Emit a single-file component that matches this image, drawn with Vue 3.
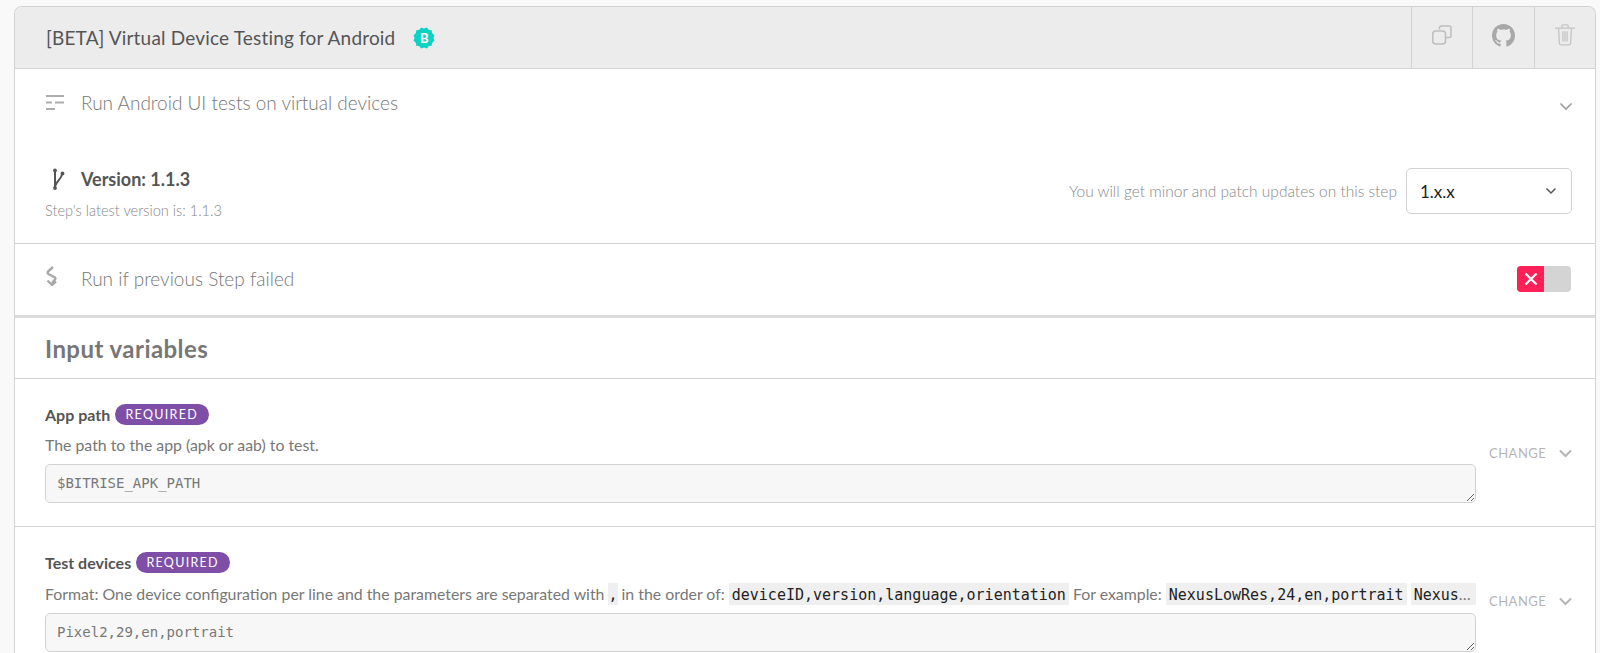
<script setup>
const badgePoints = Array.from({ length: 24 }, (_, i) => {
  const r = i % 2 ? 10.8 : 9.5
  const a = (i * Math.PI) / 12
  return `${(11 + r * Math.sin(a)).toFixed(2)},${(11 - r * Math.cos(a)).toFixed(2)}`
}).join(' ')
</script>

<template>
  <div class="page">
    <section class="card">
      <header class="head">
        <div class="title">
          <span>[BETA] Virtual Device Testing for Android</span>
          <span class="badge">
            <svg width="22" height="22" viewBox="0 0 22 22"><polygon :points="badgePoints" fill="#0dd3c4" /></svg>
            <b>B</b>
          </span>
        </div>
        <button class="tool">
          <svg width="24" height="24" viewBox="0 0 24 24" fill="none" stroke="#bdbdbd" stroke-width="1.5">
            <path d="M9.5 6.5V4.8A1.8 1.8 0 0 1 11.3 3h7.9A1.8 1.8 0 0 1 21 4.8v7.9a1.8 1.8 0 0 1-1.8 1.8h-3.7" />
            <rect x="2.8" y="8" width="12.7" height="13" rx="3" />
          </svg>
        </button>
        <button class="tool">
          <svg width="23" height="23" viewBox="0 0 16 16" fill="#a8a8a8">
            <path d="M8 0C3.58 0 0 3.58 0 8c0 3.54 2.29 6.53 5.47 7.59.4.07.55-.17.55-.38 0-.19-.01-.82-.01-1.49-2.01.37-2.53-.49-2.69-.94-.09-.23-.48-.94-.82-1.13-.28-.15-.68-.52-.01-.53.63-.01 1.08.58 1.23.82.72 1.21 1.87.87 2.33.66.07-.52.28-.87.51-1.07-1.78-.2-3.64-.89-3.64-3.95 0-.87.31-1.59.82-2.15-.08-.2-.36-1.02.08-2.12 0 0 .67-.21 2.2.82.64-.18 1.32-.27 2-.27s1.36.09 2 .27c1.53-1.04 2.2-.82 2.2-.82.44 1.1.16 1.92.08 2.12.51.56.82 1.27.82 2.15 0 3.07-1.87 3.75-3.65 3.95.29.25.54.73.54 1.48 0 1.07-.01 1.93-.01 2.2 0 .21.15.46.55.38A8.01 8.01 0 0 0 16 8c0-4.42-3.58-8-8-8z" />
          </svg>
        </button>
        <button class="tool">
          <svg width="22" height="24" viewBox="0 0 24 26" fill="none" stroke="#c4c4c4" stroke-width="1.4">
            <path d="M1 5.500h22M8.500 5V3.200c0-.7.5-1.200 1.200-1.200h4.600c.7 0 1.200.5 1.200 1.200V5" />
            <path d="M5 6l.8 15.500c.1 1.400 1 2.300 2.400 2.300h7.600c1.400 0 2.300-.9 2.400-2.300L19 6" />
            <path d="M9.700 9v11M12 9v11M14.300 9v11" />
          </svg>
        </button>
      </header>

      <div class="row row-desc">
        <svg class="row-icon desc-icon" width="20" height="16" viewBox="0 0 20 16" stroke="#adadad" stroke-width="2" fill="none">
          <path d="M1 2h18M1 8.500h6M10 8.500h9M1 15h9" />
        </svg>
        <span class="row-label">Run Android UI tests on virtual devices</span>
        <svg class="chev-desc" width="14" height="9" viewBox="0 0 14 9" fill="none" stroke="#9a9a9a" stroke-width="1.6">
          <path d="M1.500 1.500 7 7l5.500-5.500" />
        </svg>
      </div>

      <div class="version">
        <div class="version-left">
          <div class="version-name">
            <svg class="row-icon" width="20" height="22" viewBox="0 0 20 22" fill="none" stroke="#555" stroke-width="2">
              <circle cx="10" cy="2.500" r="1.900" fill="#555" stroke="none" />
              <circle cx="10" cy="20" r="1.900" fill="#555" stroke="none" />
              <circle cx="17.500" cy="5.500" r="1.900" fill="#555" stroke="none" />
              <path d="M10 2.500V20M17 6c-.5 5-4.500 6-6.500 11.500" />
            </svg>
            <strong>Version: 1.1.3</strong>
          </div>
          <div class="latest">Step's latest version is: 1.1.3</div>
        </div>
        <div class="version-right">
          <span class="updates">You will get minor and patch updates on this step</span>
          <div class="select">
            <span>1.x.x</span>
            <svg width="12" height="8" viewBox="0 0 12 8" fill="none" stroke="#555" stroke-width="1.500">
              <path d="M1.500 1.500 6 6l4.500-4.500" />
            </svg>
          </div>
        </div>
      </div>

      <div class="row row-run">
        <svg class="row-icon run-icon" width="20" height="20" viewBox="0 0 20 20" fill="none" stroke="#a8a8a8" stroke-width="2.400">
          <path d="M8 1 3 5.500Q2 7 3.500 8L10 11.500Q11 12.500 10 13.500L7 17" />
          <path d="M2.500 14.500 7 19l4-3.500" />
        </svg>
        <span class="row-label">Run if previous Step failed</span>
        <div class="toggle">
          <span class="toggle-on">
            <svg width="14" height="14" viewBox="0 0 14 14" stroke="#fff" stroke-width="2.200"><path d="M1.500 1.500l11 11M12.500 1.500l-11 11" /></svg>
          </span>
        </div>
      </div>

      <h2 class="inputs">Input variables</h2>

      <div class="field">
        <div class="field-main">
          <div class="field-name"><strong>App path</strong><span class="req">REQUIRED</span></div>
          <p class="field-desc">The path to the app (apk or aab) to test.</p>
          <textarea class="area" readonly spellcheck="false">$BITRISE_APK_PATH</textarea>
        </div>
        <div class="change">
          <span>CHANGE</span>
          <svg width="13" height="9" viewBox="0 0 13 9" fill="none" stroke="#b5b5b5" stroke-width="2"><path d="M1 1.500l5.500 5.500L12 1.500" /></svg>
        </div>
      </div>

      <div class="field">
        <div class="field-main">
          <div class="field-name"><strong>Test devices</strong><span class="req">REQUIRED</span></div>
          <p class="field-desc with-code">Format: One device configuration per line and the parameters are separated with <code class="tight">,</code> in the order of: <code>deviceID,version,language,orientation</code> For example: <code>NexusLowRes,24,en,portrait</code> <code>NexusLowRes,24,en,landscape</code></p>
          <textarea class="area" readonly spellcheck="false">Pixel2,29,en,portrait</textarea>
        </div>
        <div class="change">
          <span>CHANGE</span>
          <svg width="13" height="9" viewBox="0 0 13 9" fill="none" stroke="#b5b5b5" stroke-width="2"><path d="M1 1.500l5.500 5.500L12 1.500" /></svg>
        </div>
      </div>
    </section>
  </div>
</template>

<style>
html, body { margin: 0; background: #f9f9f9; overflow: hidden; }
</style>

<style scoped>
.page {
  height: 653px;
  overflow: hidden;
  box-sizing: border-box;
  padding: 6px 4px 0 14px;
  font-family: Lato, "Noto Sans", sans-serif;
  color: #555;
}
.card {
  background: #fff;
  border: 1px solid #d2d2d2;
  border-bottom: 0;
  border-radius: 8px 8px 0 0;
}
.head {
  display: flex;
  height: 61px;
  background: #ececec;
  border-bottom: 1px solid #d4d4d4;
  border-radius: 7px 7px 0 0;
}
.title {
  flex: 1;
  display: flex;
  align-items: center;
  gap: 18px;
  padding-left: 31px;
  font-size: 19px;
  letter-spacing: .18px;
  color: #555;
}
.badge { position: relative; width: 22px; height: 22px; display: block; }
.badge svg { display: block; }
.badge b {
  position: absolute;
  inset: 0;
  text-align: center;
  line-height: 22px;
  font-size: 13px;
  letter-spacing: 0;
  color: #fff;
  font-weight: 900;
}
.tool {
  width: 61.500px;
  padding: 0 0 5px;
  border: 0;
  border-left: 1px solid #d2d2d2;
  background: transparent;
  display: flex;
  align-items: center;
  justify-content: center;
}
.row { display: flex; align-items: center; padding: 0 24px 0 30px; }
.row-icon { flex: none; }
.row-label { font-size: 19px; font-weight: 300; color: #777; margin-left: 16px; flex: 1; }
.row-desc { height: 71px; padding-bottom: 4px; box-sizing: border-box; }
.desc-icon { margin-top: -2px; }
.row-run { height: 72px; border-top: 1px solid #d2d2d2; box-sizing: border-box; padding-bottom: 3px; }
.chev-desc { margin-top: 7px; margin-right: -2px; }
.run-icon { margin-top: -5px; }
.version {
  height: 103px;
  box-sizing: border-box;
  padding: 27px 23px 0 30px;
  display: flex;
  justify-content: space-between;
}
.version-name { display: flex; align-items: center; height: 24px; }
.version-name .row-icon { margin-right: 16px; }
.version-name strong { font-size: 18px; font-weight: 700; color: #555; }
.latest { margin-top: 11px; font-size: 14.600px; font-weight: 300; color: #888; }
.version-right { display: flex; align-items: center; gap: 9px; height: 46px; margin-top: 1px; }
.updates { font-size: 15.500px; font-weight: 300; color: #888; }
.select {
  box-sizing: border-box;
  width: 166px;
  height: 46px;
  border: 1px solid #d2d2d2;
  border-radius: 5px;
  display: flex;
  align-items: center;
  justify-content: space-between;
  padding: 0 14px 0 13px;
  font-size: 17px;
  color: #222;
}
.toggle {
  width: 54px;
  height: 26px;
  background: #d4d4d4;
  border-radius: 4px;
  overflow: hidden;
  margin-top: 1px;
}
.toggle-on {
  width: 27px;
  height: 26px;
  background: #ff2058;
  display: flex;
  align-items: center;
  justify-content: center;
}
.inputs {
  margin: 0;
  height: 64px;
  box-sizing: border-box;
  border-top: 3px solid #dcdcdc;
  border-bottom: 1px solid #d2d2d2;
  padding: 0 0 0 30px;
  font-size: 24px;
  letter-spacing: .45px;
  line-height: 61px;
  font-weight: 700;
  color: #777;
}
.field {
  display: flex;
  align-items: flex-start;
  height: 148px;
  box-sizing: border-box;
  border-bottom: 1px solid #d2d2d2;
  padding: 25px 0 0 30px;
}
.field-main { width: 1431px; flex: none; }
.field-name { display: flex; align-items: center; height: 21px; }
.field-name strong { font-size: 16px; font-weight: 700; color: #555; }
.req {
  margin-left: 4.500px;
  width: 94px;
  height: 21px;
  line-height: 21px;
  text-align: center;
  border-radius: 11px;
  background: #7f4ea6;
  color: #fff;
  font-size: 12.500px;
  letter-spacing: 1.300px;
  font-weight: 400;
}
.field-desc {
  margin: 9px 0 8px;
  height: 22px;
  line-height: 22px;
  font-size: 15.850px;
  color: #777;
  white-space: nowrap;
  overflow: hidden;
  text-overflow: ellipsis;
}
.with-code { margin-top: 10px; }
code {
  font-family: "DejaVu Sans Mono", monospace;
  font-size: 15px;
  background: #efefef;
  color: #222;
  padding: 3px;
}
code.tight { padding: 3px 0; }
.area {
  display: block;
  box-sizing: border-box;
  width: 100%;
  height: 39px;
  margin: 0;
  padding: 9px 11px;
  border: 1px solid #d2d2d2;
  border-radius: 5px;
  background: #f7f7f7;
  font-family: "DejaVu Sans Mono", monospace;
  font-size: 14px;
  line-height: 19px;
  color: #777;
  outline: none;
}
.change {
  display: flex;
  align-items: center;
  gap: 13px;
  padding: 41px 0 0 13px;
  font-size: 13px;
  color: #b5b5b5;
  letter-spacing: .5px;
}
</style>
